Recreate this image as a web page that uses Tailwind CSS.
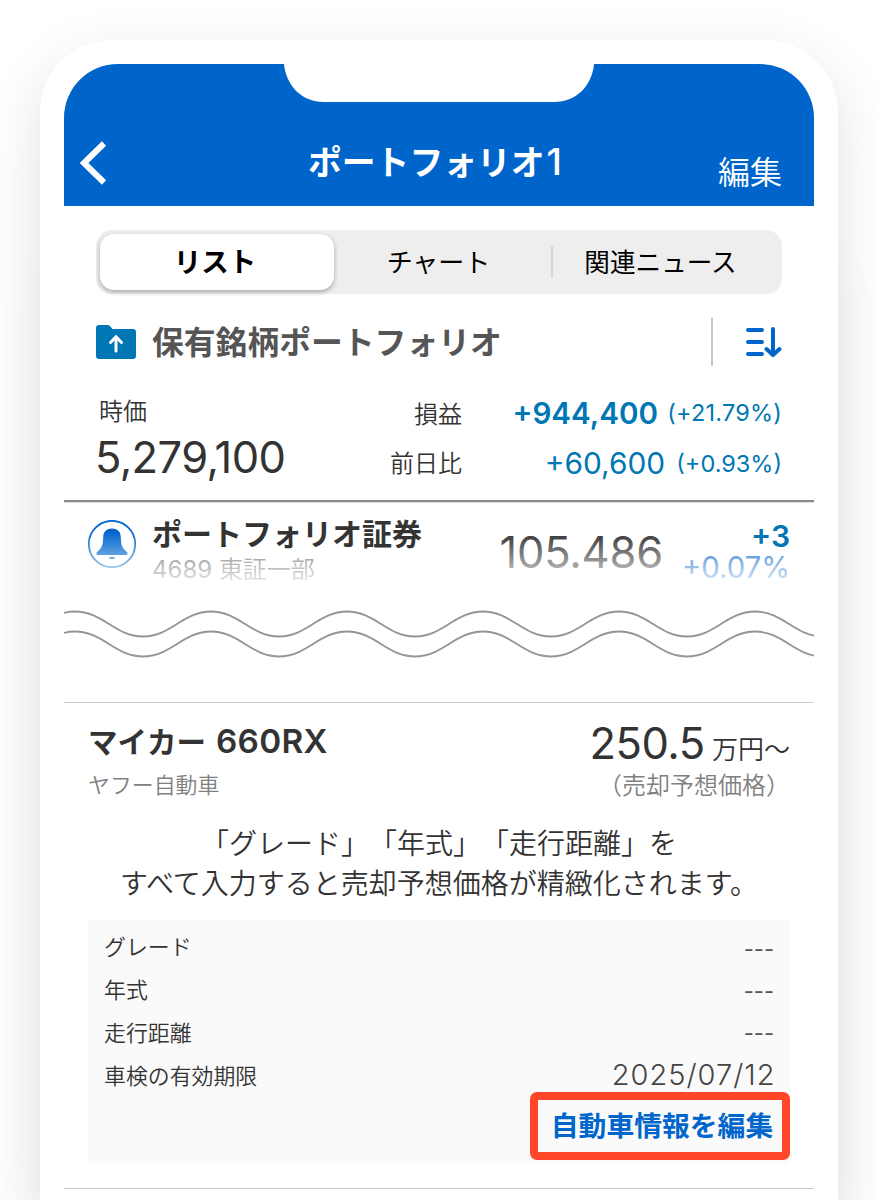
<!DOCTYPE html>
<html lang="ja">
<head>
    <meta charset="UTF-8">
    <meta name="viewport" content="width=device-width, initial-scale=1.0">
    <title>ポートフォリオ1</title>
    <script src="https://cdn.jsdelivr.net/npm/@tailwindcss/browser@4"></script>
</head>
<body class="h-[1200px] overflow-hidden bg-white px-10 pt-10 font-['Inter','Noto_Sans_CJK_JP',sans-serif] text-[#333] [text-spacing-trim:space-all]">
<div class="h-[1160px] w-[798px] rounded-t-[72px] bg-white p-6 pb-0 whitespace-nowrap shadow-[0_20px_60px_rgba(0,0,0,0.12),0_200px_60px_rgba(0,0,0,0.04)]">

    <!-- ヘッダー -->
    <header class="relative h-[142px] rounded-t-[54px] bg-[#0065cb] text-white">
        <svg class="absolute top-0 left-[220px]" width="310" height="38" viewBox="0 0 310 38" fill="#fff">
            <path d="M0 0C2 21 17 38 40 38H270C293 38 308 21 310 0Z"/>
        </svg>
        <div class="grid h-full grid-cols-[1fr_auto_1fr] items-center pt-[56px] pr-8 pl-[15px]">
            <svg width="30" height="44" viewBox="0 0 30 44" fill="none" stroke="#fff" stroke-width="6">
                <path d="M25 2.5L5 22L25 41.5"/>
            </svg>
            <h1 class="-mt-1 pl-[9px] text-[33.8px] leading-none font-bold">ポートフォリオ<span class="ml-0.5 text-[37px] font-medium">1</span></h1>
            <span class="mt-[19px] text-right text-[32px] leading-none font-[350]">編集</span>
        </div>
    </header>

    <!-- タブ -->
    <nav class="mx-8 mt-6 flex h-16 items-center rounded-2xl bg-[#eee] p-1 text-[26px] leading-none text-black">
        <div class="flex h-14 w-[234px] items-center justify-center rounded-[14px] bg-white pt-0.5 pr-1 text-[27.5px] font-bold shadow-[0_2px_5px_rgba(0,0,0,0.3)]">リスト</div>
        <div class="flex w-[217px] items-center justify-center pt-0.5 pr-2">チャート</div>
        <div class="h-8 w-0.5 bg-[#d4d4d6]"></div>
        <div class="flex flex-1 items-center justify-center pt-0.5 pr-2.5 text-[25.6px]">関連ニュース</div>
    </nav>

    <section class="mx-8 mt-6 flex h-12 items-center">
        <svg width="40" height="34" viewBox="0 0 40 34">
            <path d="M3 0H11Q13 0 14 1L16.500 4H37Q40 4 40 7V31Q40 34 37 34H3Q0 34 0 31V3Q0 0 3 0Z" fill="#0077b5"/>
            <path d="M20 26V12M14.500 17.500L20 11.700L25.500 17.500" fill="none" stroke="#fff" stroke-width="3" stroke-linecap="round" stroke-linejoin="round"/>
        </svg>
        <h2 class="mt-0.5 ml-4 text-[31.8px] leading-none font-bold text-[#555]">保有銘柄ポートフォリオ</h2>
        <div class="ml-auto h-12 w-0.5 bg-[#c8c8c8]"></div>
        <svg class="ml-8" width="37" height="32" viewBox="0 0 37 32" fill="none" stroke="#0066cc" stroke-width="4" stroke-linecap="round" stroke-linejoin="round">
            <path d="M3 4H17M3 16H17M3 28H17M28 3V28M21.500 23L28 29L34.500 23"/>
        </svg>
    </section>

    <section class="mt-[22px] flex h-28 justify-between px-8">
        <div>
            <div class="mt-[11px] ml-[3px] text-[24px] leading-[26px] font-[350]">時価</div>
            <div class="-ml-px text-[43.500px] leading-[64px] tracking-[-0.6px]">5,279,100</div>
        </div>
        <div class="grid grid-cols-[auto_196px_124px] grid-rows-[50px_50px] items-center text-right leading-none text-[#0077b5]">
            <span class="pt-1 text-[24px] font-[350] text-[#333]">損益</span>
            <span class="pt-0.5 text-[29.600px] font-semibold">+944,400</span>
            <span class="text-[23.500px] tracking-[0.2px]">(+21.79%)</span>
            <span class="pt-0.5 text-[24px] font-[350] text-[#333]">前日比</span>
            <span class="-mr-[7px] pt-0.5 text-[29.800px]">+60,600</span>
            <span class="pt-0.5 text-[23.500px]">(+0.93%)</span>
        </div>
    </section>

    <!-- 銘柄（下端に向かってフェード） -->
    <section class="relative flex h-[108px] border-t-2 border-[#8b8b8b] px-6 shadow-[inset_0_1px_0_#ddd]">
        <svg class="mt-[18px]" width="48" height="48" viewBox="0 0 48 48">
            <circle cx="24" cy="24" r="23.2" fill="#fff" stroke="#0066cc" stroke-width="1.7"/>
            <path d="M24 8.500C18.500 8.500 15.300 12 15.200 17C15 25.500 13.800 28 9.500 31.500C7.700 33 8.300 35 10.200 35H37.800C39.700 35 40.300 33 38.500 31.500C34.200 28 33 25.500 32.800 17C32.700 12 29.500 8.500 24 8.500ZM20.500 37H27.500Q24 41.500 20.500 37Z" fill="#0066cc"/>
        </svg>
        <div class="ml-4 w-[290px] pt-[18px]">
            <div class="relative z-20 text-[30px] leading-[28px] font-bold">ポートフォリオ証券</div>
            <div class="mt-[9px] text-[24px] leading-[26px] font-[350] text-[#666]"><span class="font-normal">4689</span> 東証一部</div>
        </div>
        <div class="ml-auto pt-[18px] text-[43.500px] leading-[64px] tracking-[-0.2px]">105.486</div>
        <div class="w-[127px] pt-[19px] text-right">
            <div class="relative z-20 text-[30px] leading-[30px] font-semibold text-[#0077b5]">+3</div>
            <div class="text-[29.300px] leading-[34px] text-[#0066cc]">+0.07%</div>
        </div>
        <div class="absolute inset-x-0 top-[30px] z-10 h-[60px] bg-linear-to-b from-white/0 to-white"></div>
    </section>

    <svg class="block" width="750" height="50" viewBox="0 0 750 50" fill="none" stroke="#949494" stroke-width="1.8">
        <path id="wave" d="M-57 28.500C-29 28.500 -17 3.500 11 3.500S51 28.500 79 28.500S119 3.500 147 3.500S187 28.500 215 28.500S255 3.500 283 3.500S323 28.500 351 28.500S391 3.500 419 3.500S459 28.500 487 28.500S527 3.500 555 3.500S595 28.500 623 28.500S663 3.500 691 3.500S731 28.500 759 28.500"/>
        <use href="#wave" y="20"/>
    </svg>

    <!-- マイカー -->
    <section class="mt-[44px] border-t-[1.5px] border-[#ccc] px-6">
        <div class="flex h-[100px] justify-between">
            <div>
                <h3 class="mt-5 text-[29.500px] leading-[36px] font-bold">マイカー<span class="ml-2.5 text-[33.300px] font-semibold tracking-[0.3px]">660RX</span></h3>
                <p class="mt-3 text-[21.900px] leading-[26px] font-[350] text-[#808080]">ヤフー自動車</p>
            </div>
            <div class="text-right">
                <p class="mt-3 text-[26px] leading-[56px] font-[350]"><span class="text-[43.500px] font-normal tracking-[-0.5px]">250.5</span> 万円〜</p>
                <p class="-mt-[5px] text-[24px] leading-[26px] font-[350] text-[#808080]">（売却予想価格）</p>
            </div>
        </div>
        <p class="mt-[21px] text-center text-[28px] leading-[40px] font-[350]">「グレード」「年式」「走行距離」を<br>すべて入力すると売却予想価格が精緻化されます。</p>

        <div class="mt-4 h-[244px] bg-[#fafafa]">
            <dl class="grid h-[172px] grid-cols-2 grid-rows-[43px_43px_43px_43px] items-center px-4 pt-1.5 text-[21.900px] leading-none font-[350]">
                <dt>グレード</dt>
                <dd class="pt-1 text-right font-normal text-[#555]">---</dd>
                <dt>年式</dt>
                <dd class="pt-0.5 text-right font-normal text-[#555]">---</dd>
                <dt>走行距離</dt>
                <dd class="text-right font-normal text-[#555]">---</dd>
                <dt>車検の有効期限</dt>
                <dd class="-mt-1 -mr-[1.5px] text-right text-[29px] font-light tracking-[1px] text-[#444]">2025/07/12</dd>
            </dl>
            <div class="ml-auto flex h-[68px] w-[260px] items-center justify-center rounded-[7px] border-8 border-[#ff4628] pt-0.5 pl-1 text-[27.800px] leading-none font-bold text-[#0066cc]">自動車情報を編集</div>
        </div>
        <div class="-mx-6 mt-6 h-px bg-[#c8c8c8]"></div>
    </section>
</div>
</body>
</html>
